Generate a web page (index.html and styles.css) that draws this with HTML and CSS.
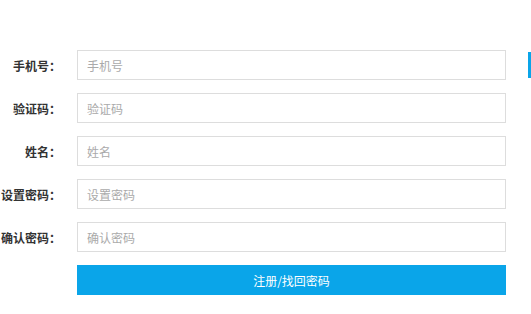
FILE: index.html
```html
<!DOCTYPE html>
<html lang="zh-CN">
<head>
<meta charset="utf-8"/>
<meta content="width=device-width, initial-scale=1.0" name="viewport"/>
<title>注册/找回密码</title>
<link rel="stylesheet" href="styles.css">
</head>
<body>
<form class="reg-form">
    <div class="form-row">
        <label class="form-label" for="phone">手机号：</label>
        <input class="form-input" id="phone" type="text" placeholder="手机号"/>
        <span class="side-tab"></span>
    </div>
    <div class="form-row">
        <label class="form-label" for="code">验证码：</label>
        <input class="form-input" id="code" type="text" placeholder="验证码"/>
    </div>
    <div class="form-row">
        <label class="form-label" for="name">姓名：</label>
        <input class="form-input" id="name" type="text" placeholder="姓名"/>
    </div>
    <div class="form-row">
        <label class="form-label" for="pwd">设置密码：</label>
        <input class="form-input" id="pwd" type="password" placeholder="设置密码"/>
    </div>
    <div class="form-row">
        <label class="form-label" for="pwd2">确认密码：</label>
        <input class="form-input" id="pwd2" type="password" placeholder="确认密码"/>
    </div>
    <div class="form-row">
        <span class="form-label"></span>
        <button class="submit-btn" type="button">注册/找回密码</button>
    </div>
</form>
</body>
</html>
```

FILE: styles.css
```css
body {
    margin: 0;
    padding: 0;
    background: #ffffff;
    font-family: "Noto Sans CJK SC", "Noto Sans", sans-serif;
    font-size: 12px;
    color: #333333;
    overflow: hidden;
}

.reg-form {
    padding-top: 50px;
}

.form-row {
    display: flex;
    align-items: center;
    margin-bottom: 13px;
}

.form-label {
    width: 61px;
    flex: none;
    margin-right: 16px;
    text-align: right;
    font-weight: bold;
    color: #333333;
    white-space: nowrap;
}

.form-input {
    flex: none;
    width: 429px;
    height: 30px;
    box-sizing: border-box;
    border: 1px solid #dddddd;
    padding: 0 9px;
    font-family: inherit;
    font-size: 12px;
    color: #333333;
    outline: none;
}

.form-input::placeholder {
    color: #aaaaaa;
}

/* partly visible tab on the right edge */
.side-tab {
    flex: none;
    width: 10px;
    height: 26px;
    margin-left: 22px;
    background: #0aa5e9;
}

.submit-btn {
    flex: none;
    width: 429px;
    height: 30px;
    border: none;
    background: #0aa5e9;
    color: #ffffff;
    font-family: inherit;
    font-size: 12px;
    cursor: pointer;
}
```
